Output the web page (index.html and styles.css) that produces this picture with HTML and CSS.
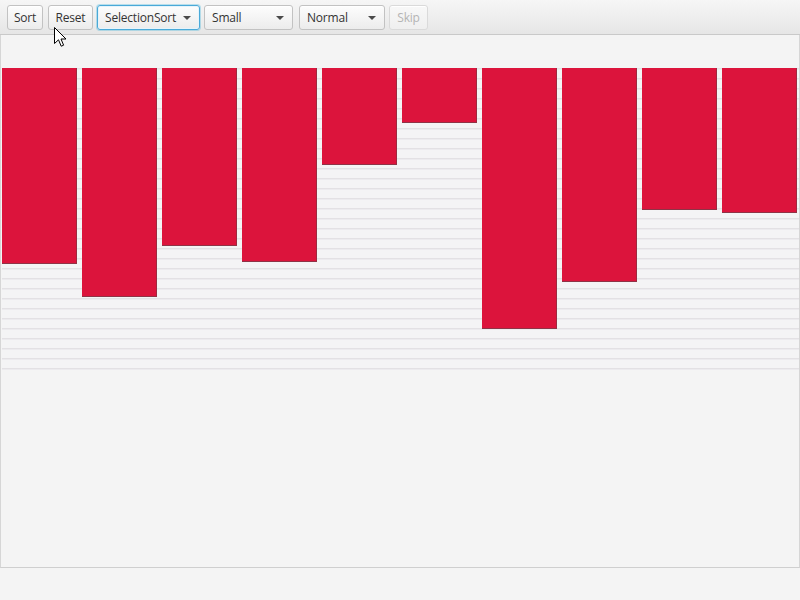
FILE: index.html
```html
<!DOCTYPE html>
<html>
<head>
<meta charset="utf-8">
<link rel="stylesheet" href="styles.css">
</head>
<body>
<div class="app">
  <div class="toolbar">
    <button class="btn w-sort">Sort</button>
    <button class="btn w-reset">Reset</button>
    <div class="combo focused w-algo"><span>SelectionSort</span><i class="arrow"></i></div>
    <div class="combo w-size"><span>Small</span><i class="arrow"></i></div>
    <div class="combo w-speed"><span>Normal</span><i class="arrow"></i></div>
    <button class="btn disabled w-skip">Skip</button>
  </div>
  <div class="chart">
    <div class="bars">
      <div class="bar" style="height:196px"></div>
      <div class="bar" style="height:229px"></div>
      <div class="bar" style="height:178px"></div>
      <div class="bar" style="height:194px"></div>
      <div class="bar" style="height:97px"></div>
      <div class="bar" style="height:55px"></div>
      <div class="bar" style="height:261px"></div>
      <div class="bar" style="height:214px"></div>
      <div class="bar" style="height:142px"></div>
      <div class="bar" style="height:145px"></div>
    </div>
  </div>
  <svg class="cursor" width="13" height="21" viewBox="0 0 13 21"><path d="M0.5 0.5 L0.5 16.5 L4.5 12.8 L7.2 19.2 L9.6 18.2 L7 12 L12 12 Z" fill="#fff" stroke="#000" stroke-width="1" stroke-linejoin="miter"/></svg>
</div>
</body>
</html>
```
FILE: styles.css
```css
* { box-sizing: border-box; }
html, body { margin: 0; padding: 0; background: #f4f4f4; }
body { width: 800px; height: 600px; overflow: hidden; font-family: "Open Sans", "Noto Sans", sans-serif; font-size: 12px; color: #333; }
.app { position: relative; width: 800px; height: 600px; }
.toolbar {
  height: 35px;
  display: flex;
  align-items: center;
  gap: 5px;
  padding: 0 0 0 7px;
  background: linear-gradient(#f6f6f6, #e6e6e6);
  border-bottom: 1px solid #c9c9c9;
}
.btn, .combo {
  height: 25px;
  margin-top: 1px;
  border: 1px solid #c2c2c2;
  border-radius: 3px;
  background: linear-gradient(#fdfdfd, #ececec);
  box-shadow: inset 0 1px 0 #ffffff;
  font: inherit;
  color: #333;
  padding: 0;
  display: flex;
  align-items: center;
  justify-content: center;
  letter-spacing: -0.2px;
}
.combo { justify-content: space-between; padding: 0 8px 0 7px; }
.arrow { width: 0; height: 0; border-left: 4px solid transparent; border-right: 4px solid transparent; border-top: 4px solid #4a4a4a; }
.focused { border-color: #4aa9d8; box-shadow: 0 0 0 1px rgba(3,158,211,0.25), inset 0 0 0 1px #e6f4fb; }
.disabled { color: #b4b4b4; border-color: #dadada; background: linear-gradient(#f8f8f8, #efefef); }
.w-sort { width: 36px; }
.w-reset { width: 45px; }
.w-algo { width: 103px; margin-left: -1px; }
.w-size { width: 89px; margin-left: -1px; }
.w-speed { width: 86px; margin-left: 1px; }
.w-skip { width: 39px; margin-left: -1px; }
.chart {
  height: 533px;
  border-left: 1px solid #d6d6d6;
  border-right: 1px solid #d6d6d6;
  border-bottom: 1px solid #cfcfcf;
  padding: 33px 0 0 1px;
  background: #f4f4f4;
}
.bars {
  height: 302px;
  display: flex;
  align-items: flex-start;
  gap: 5px;
  background: repeating-linear-gradient(to bottom, #e3e1e4 0 1px, #ecebee 1px 2px, #f4f4f5 2px 10px);
}
.bar {
  width: 75px;
  background: #dc143c;
  border-right: 1px solid #9c2a40;
  border-bottom: 1px solid #8e3447;
}
.cursor { position: absolute; left: 54px; top: 27px; }
```
